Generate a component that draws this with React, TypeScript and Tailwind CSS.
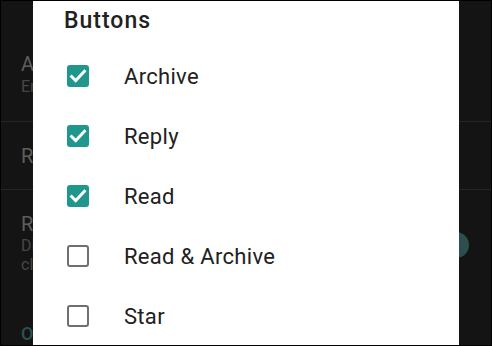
import React from 'react';

const options = [
    { label: 'Archive', checked: true },
    { label: 'Reply', checked: true },
    { label: 'Read', checked: true },
    { label: 'Read & Archive', checked: false },
    { label: 'Star', checked: false },
];

function CheckBox({ checked }: { checked: boolean }) {
    if (!checked) {
        return <div className="w-[22px] h-[22px] rounded-[3px] border-[2.5px] border-[#6f6f6f] shrink-0" />;
    }
    return (
        <div className="w-[22px] h-[22px] rounded-[3px] bg-[#1f978c] flex items-center justify-center shrink-0">
            <svg viewBox="0 0 24 24" className="w-[22px] h-[22px]" fill="none" stroke="white" strokeWidth="3.2" strokeLinecap="square">
                <path d="M5 12.5l4.5 4.5L19 7" />
            </svg>
        </div>
    );
}

export default function App() {
    return (
        <div
            className="relative w-[492px] h-[346px] overflow-hidden border border-black bg-[#141414]"
            style={{ fontFamily: 'Roboto, "Noto Sans", sans-serif' }}
        >
            {/* settings screen behind the dialog */}
            <div className="flex flex-col pl-[20px]">
                <div className="h-[120px] flex flex-col pt-[50px]">
                    <span className="text-[20px] leading-[26px] text-[#5e5e5e]">Actions</span>
                    <span className="text-[16px] leading-[20px] text-[#474747]">Enabled buttons</span>
                </div>
                <div className="h-px bg-[#262626] -ml-[20px]" />
                <div className="h-[67px] flex items-center">
                    <span className="text-[20px] text-[#5e5e5e]">Reply</span>
                </div>
                <div className="h-px bg-[#262626] -ml-[20px]" />
                <div className="h-[130px] flex flex-col pt-[22px]">
                    <span className="text-[20px] leading-[24px] text-[#5e5e5e]">Remove</span>
                    <span className="text-[16px] leading-[19px] text-[#474747]">Dismiss after</span>
                    <span className="text-[16px] leading-[19px] text-[#474747]">clicking</span>
                </div>
                <div className="flex items-center">
                    <span className="text-[18px] font-medium text-[#2a5350]">Other</span>
                </div>
            </div>
            <div className="absolute left-[442px] top-[231px] w-[26px] h-[26px] rounded-full bg-[#2c4f4d]" />

            {/* dialog */}
            <div className="absolute left-[32px] top-0 w-[426px] h-[344px] bg-white pl-[31px]">
                <div className="pt-[6px] text-[23px] leading-[28px] font-medium tracking-[1px] text-[#212121]">Buttons</div>
                <div className="flex flex-col pt-[11px]">
                    {options.map((o) => (
                        <div key={o.label} className="h-[60px] flex items-center pl-[3px]">
                            <CheckBox checked={o.checked} />
                            <span className="ml-[35px] text-[22px] tracking-[0.3px] text-[#212121]">{o.label}</span>
                        </div>
                    ))}
                </div>
            </div>
        </div>
    );
}
